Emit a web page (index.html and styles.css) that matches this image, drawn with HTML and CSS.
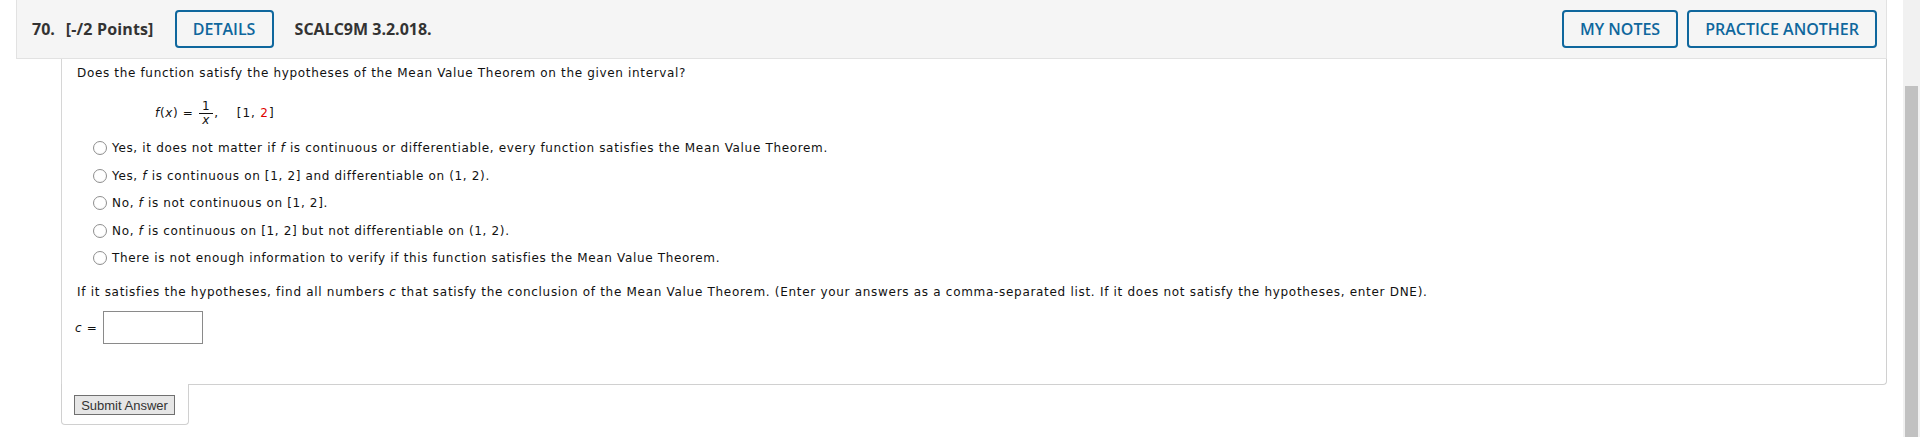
FILE: index.html
```html
<!DOCTYPE html>
<html>
<head>
<meta charset="utf-8">
<link rel="stylesheet" href="styles.css">
</head>
<body>
<div class="layout">
  <div class="page">
    <div class="q-header">
      <div class="q-title">
        <span class="q-num">70.</span>
        <span class="q-points">[-/2 Points]</span>
        <button class="btn-outline btn-details">DETAILS</button>
        <span class="q-ref">SCALC9M 3.2.018.</span>
      </div>
      <div class="q-actions">
        <button class="btn-outline">MY NOTES</button>
        <button class="btn-outline">PRACTICE ANOTHER</button>
      </div>
    </div>
    <div class="q-body">
      <p class="prompt">Does the function satisfy the hypotheses of the Mean Value Theorem on the given interval?</p>
      <div class="formula">
        <span class="it">f</span>(<span class="it">x</span>)&nbsp;=&nbsp;<span class="frac"><span class="num">1</span><span class="den it">x</span></span><span class="comma">,</span><span class="interval">[1, <span class="red">2</span>]</span>
      </div>
      <div class="options">
        <label class="option"><input type="radio" name="mvt" class="radio"><span>Yes, it does not matter if <span class="it">f</span> is continuous or differentiable, every function satisfies the Mean Value Theorem.</span></label>
        <label class="option"><input type="radio" name="mvt" class="radio"><span>Yes, <span class="it">f</span> is continuous on [1, 2] and differentiable on (1, 2).</span></label>
        <label class="option"><input type="radio" name="mvt" class="radio"><span>No, <span class="it">f</span> is not continuous on [1, 2].</span></label>
        <label class="option"><input type="radio" name="mvt" class="radio"><span>No, <span class="it">f</span> is continuous on [1, 2] but not differentiable on (1, 2).</span></label>
        <label class="option"><input type="radio" name="mvt" class="radio"><span>There is not enough information to verify if this function satisfies the Mean Value Theorem.</span></label>
      </div>
      <p class="prompt second">If it satisfies the hypotheses, find all numbers <span class="it">c</span> that satisfy the conclusion of the Mean Value Theorem. (Enter your answers as a comma-separated list. If it does not satisfy the hypotheses, enter DNE).</p>
      <div class="answer-row">
        <span class="it">c</span>&nbsp;=&nbsp;<input type="text" class="answer-input">
      </div>
    </div>
    <div class="submit-tab">
      <button class="submit-btn">Submit Answer</button>
    </div>
  </div>
  <div class="scrollbar"><div class="thumb"></div></div>
</div>
</body>
</html>
```
FILE: styles.css
```css
html, body {
  margin: 0;
  padding: 0;
  background: #ffffff;
  height: 437px;
  overflow: hidden;
}
.layout {
  display: flex;
  height: 437px;
}
.page {
  flex: 1;
  padding: 0 16px;
}
.q-header {
  display: flex;
  align-items: center;
  justify-content: space-between;
  height: 58px;
  background: #f5f5f5;
  border: 1px solid #e2e2e2;
  border-top: none;
  padding: 0 9px 0 15px;
  font-family: "Open Sans", "Liberation Sans", sans-serif;
  color: #333;
}
.q-title {
  display: flex;
  align-items: center;
}
.q-num, .q-points, .q-ref {
  font-size: 16px;
  font-weight: 700;
  color: #333;
}
.q-points {
  margin-left: 11px;
  letter-spacing: 0.15px;
}
.q-title .btn-outline {
  margin: 0 21px;
}
.q-actions {
  display: flex;
  gap: 9px;
}
.btn-outline {
  height: 38px;
  padding: 0 16px;
  background: transparent;
  border: 2px solid #0f679d;
  border-radius: 4px;
  color: #0f679d;
  font-family: "Open Sans", "Liberation Sans", sans-serif;
  font-size: 16px;
  font-weight: 600;
}
.btn-details {
  width: 99px;
  padding: 0;
}
.q-body {
  margin-left: 45px;
  border-left: 1px solid #d6d6d6;
  border-right: 1px solid #d0d0d0;
  border-bottom: 1px solid #d0d0d0;
  border-bottom-right-radius: 4px;
  padding: 7px 15px 40px 15px;
  font-family: "DejaVu Sans", Verdana, sans-serif;
  font-size: 12px;
  letter-spacing: 0.66px;
  line-height: 14px;
  color: #111;
}
.prompt {
  margin: 0;
}
.it {
  font-style: italic;
}
.red {
  color: #e00000;
}
.formula {
  display: flex;
  align-items: center;
  height: 30px;
  margin: 18px 0 0 78px;
}
.frac {
  display: inline-flex;
  flex-direction: column;
  align-items: center;
  margin: 0 1px;
}
.frac .num {
  padding: 0 3px;
  border-bottom: 1px solid #111;
  line-height: 13px;
}
.frac .den {
  line-height: 13px;
}
.interval {
  margin-left: 18px;
  letter-spacing: 0.9px;
}
.options {
  display: flex;
  flex-direction: column;
  gap: 11.5px;
  margin: 12px 0 0 16px;
}
.option {
  display: flex;
  align-items: center;
  height: 16px;
}
.radio {
  appearance: none;
  -webkit-appearance: none;
  width: 14px;
  height: 14px;
  margin: 0 5px 0 0;
  border: 1px solid #8f8f8f;
  border-radius: 50%;
  background: radial-gradient(circle at 50% 40%, #ffffff 55%, #efefef 100%);
}
.second {
  margin-top: 19px;
  letter-spacing: 0.7px;
}
.answer-row {
  display: flex;
  align-items: center;
  margin-top: 12px;
  margin-left: -2px;
}
.answer-input {
  width: 98px;
  height: 31px;
  box-sizing: content-box;
  margin: 0 0 0 1px;
  padding: 0;
  border: 1px solid #8a8a8a;
  background: #fff;
}
.submit-tab {
  width: 126px;
  margin: -1px 0 0 45px;
  position: relative;
  background: #fff;
  border: 1px solid #d0d0d0;
  border-top: none;
  border-radius: 0 0 4px 4px;
  padding: 11px 0 9px 0;
  height: 20px;
}
.submit-btn {
  margin-left: 12px;
  height: 20px;
  width: 101px;
  padding: 0;
  font-family: "Liberation Sans", Arial, sans-serif;
  font-size: 13px;
  color: #333;
  background: #e6e6e6;
  border: 1px solid #707070;
  border-radius: 0;
}
.scrollbar {
  width: 17px;
  background: #f1f1f1;
  display: flex;
  justify-content: center;
  padding-top: 86px;
  box-sizing: border-box;
}
.thumb {
  width: 13px;
  height: 400px;
  background: #c1c1c1;
}
```
